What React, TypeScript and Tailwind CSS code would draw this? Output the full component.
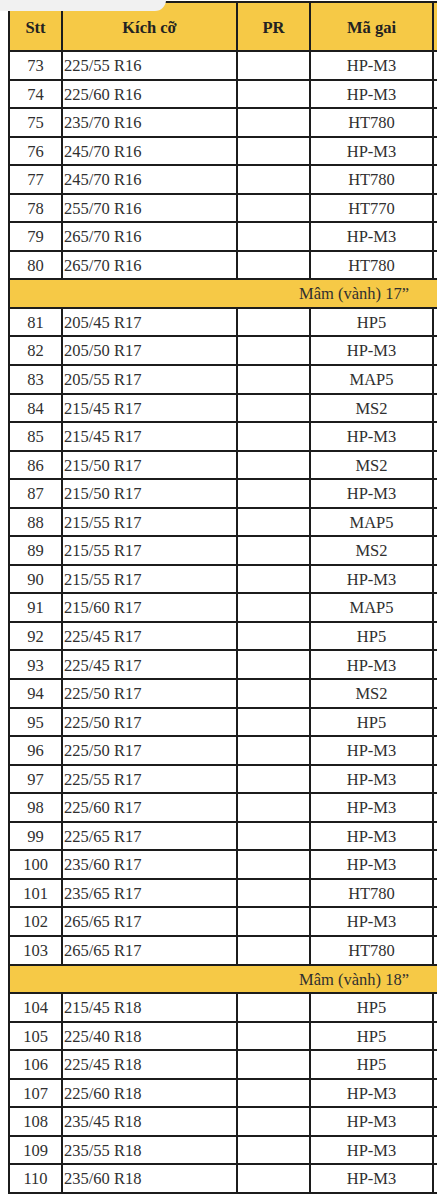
type Row = { stt: number; size: string; code: string } | { section: string };

const rows: Row[] = [
	{ stt: 73, size: "225/55 R16", code: "HP-M3" },
	{ stt: 74, size: "225/60 R16", code: "HP-M3" },
	{ stt: 75, size: "235/70 R16", code: "HT780" },
	{ stt: 76, size: "245/70 R16", code: "HP-M3" },
	{ stt: 77, size: "245/70 R16", code: "HT780" },
	{ stt: 78, size: "255/70 R16", code: "HT770" },
	{ stt: 79, size: "265/70 R16", code: "HP-M3" },
	{ stt: 80, size: "265/70 R16", code: "HT780" },
	{ section: "Mâm (vành) 17”" },
	{ stt: 81, size: "205/45 R17", code: "HP5" },
	{ stt: 82, size: "205/50 R17", code: "HP-M3" },
	{ stt: 83, size: "205/55 R17", code: "MAP5" },
	{ stt: 84, size: "215/45 R17", code: "MS2" },
	{ stt: 85, size: "215/45 R17", code: "HP-M3" },
	{ stt: 86, size: "215/50 R17", code: "MS2" },
	{ stt: 87, size: "215/50 R17", code: "HP-M3" },
	{ stt: 88, size: "215/55 R17", code: "MAP5" },
	{ stt: 89, size: "215/55 R17", code: "MS2" },
	{ stt: 90, size: "215/55 R17", code: "HP-M3" },
	{ stt: 91, size: "215/60 R17", code: "MAP5" },
	{ stt: 92, size: "225/45 R17", code: "HP5" },
	{ stt: 93, size: "225/45 R17", code: "HP-M3" },
	{ stt: 94, size: "225/50 R17", code: "MS2" },
	{ stt: 95, size: "225/50 R17", code: "HP5" },
	{ stt: 96, size: "225/50 R17", code: "HP-M3" },
	{ stt: 97, size: "225/55 R17", code: "HP-M3" },
	{ stt: 98, size: "225/60 R17", code: "HP-M3" },
	{ stt: 99, size: "225/65 R17", code: "HP-M3" },
	{ stt: 100, size: "235/60 R17", code: "HP-M3" },
	{ stt: 101, size: "235/65 R17", code: "HT780" },
	{ stt: 102, size: "265/65 R17", code: "HP-M3" },
	{ stt: 103, size: "265/65 R17", code: "HT780" },
	{ section: "Mâm (vành) 18”" },
	{ stt: 104, size: "215/45 R18", code: "HP5" },
	{ stt: 105, size: "225/40 R18", code: "HP5" },
	{ stt: 106, size: "225/45 R18", code: "HP5" },
	{ stt: 107, size: "225/60 R18", code: "HP-M3" },
	{ stt: 108, size: "235/45 R18", code: "HP-M3" },
	{ stt: 109, size: "235/55 R18", code: "HP-M3" },
	{ stt: 110, size: "235/60 R18", code: "HP-M3" },
];

const cell = "border-2 border-[#1c1c1c] px-0 pb-0 pt-[2px] [font-family:'Liberation_Serif',serif] text-[16.5px] leading-none";

export default function App() {
	return (
		<div className="relative w-[437px] overflow-hidden bg-white pb-[8px] pl-[8px] pt-[1px] text-[#303030]">
			<table className="w-[700px] table-fixed border-collapse">
				<colgroup>
					<col className="w-[53px]" />
					<col className="w-[175px]" />
					<col className="w-[73px]" />
					<col className="w-[123px]" />
					<col className="w-[276px]" />
				</colgroup>
				<thead>
					<tr className="h-[49px] bg-[#f6c946] text-[#222]">
						<th className={`${cell} pt-[4px] font-bold`}>Stt</th>
						<th className={`${cell} pt-[4px] font-bold`}>Kích cỡ</th>
						<th className={`${cell} pt-[4px] font-bold`}>PR</th>
						<th className={`${cell} pt-[4px] font-bold`}>Mã gai</th>
						<th className={cell}></th>
					</tr>
				</thead>
				<tbody>
					{rows.map((r, i) =>
						"section" in r ? (
							<tr key={i} className="h-[28.55px] bg-[#f6c946]">
								<td colSpan={5} className={`${cell} pl-[289px] text-left`}>
									{r.section}
								</td>
							</tr>
						) : (
							<tr key={i} className="h-[28.55px] bg-white">
								<td className={`${cell} text-center`}>{r.stt}</td>
								<td className={`${cell} pl-[1px] text-left`}>{r.size}</td>
								<td className={cell}></td>
								<td className={`${cell} text-center`}>{r.code}</td>
								<td className={cell}></td>
							</tr>
						),
					)}
				</tbody>
			</table>
			<div className="absolute left-0 top-0 h-[11px] w-[166px] rounded-br-[14px] bg-[#f1f1f1]" />
		</div>
	);
}
